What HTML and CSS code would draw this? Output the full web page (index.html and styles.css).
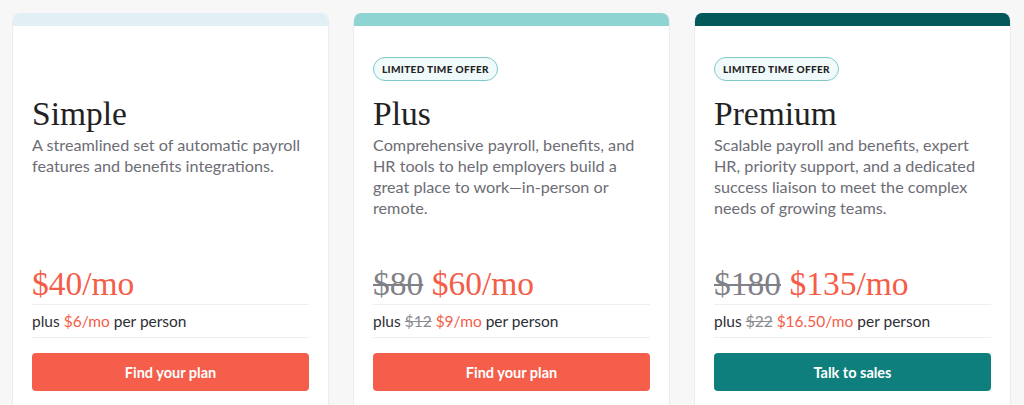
FILE: index.html
```html
<!DOCTYPE html>
<html lang="en">
<head>
<meta charset="utf-8">
<title>Plans</title>
<link rel="stylesheet" href="styles.css">
</head>
<body>
<main class="plans">
  <section class="card">
    <div class="card-bar bar-simple"></div>
    <div class="card-body">
      <div class="badge-slot"></div>
      <h2 class="plan-name">Simple</h2>
      <p class="plan-desc">A streamlined set of automatic payroll features and benefits integrations.</p>
      <div class="price"><span class="now">$40/mo</span></div>
      <div class="per-person">plus <span class="now">$6/mo</span> per person</div>
      <a class="cta cta-coral" href="#">Find your plan</a>
    </div>
  </section>
  <section class="card">
    <div class="card-bar bar-plus"></div>
    <div class="card-body">
      <div class="badge-slot"><span class="badge">LIMITED TIME OFFER</span></div>
      <h2 class="plan-name">Plus</h2>
      <p class="plan-desc">Comprehensive payroll, benefits, and HR tools to help employers build a great place to work—in-person or remote.</p>
      <div class="price"><span class="was">$80</span> <span class="now">$60/mo</span></div>
      <div class="per-person">plus <span class="was">$12</span> <span class="now">$9/mo</span> per person</div>
      <a class="cta cta-coral" href="#">Find your plan</a>
    </div>
  </section>
  <section class="card">
    <div class="card-bar bar-premium"></div>
    <div class="card-body">
      <div class="badge-slot"><span class="badge">LIMITED TIME OFFER</span></div>
      <h2 class="plan-name">Premium</h2>
      <p class="plan-desc">Scalable payroll and benefits, expert HR, priority support, and a dedicated success liaison to meet the complex needs of growing teams.</p>
      <div class="price"><span class="was">$180</span> <span class="now">$135/mo</span></div>
      <div class="per-person">plus <span class="was">$22</span> <span class="now">$16.50/mo</span> per person</div>
      <a class="cta cta-teal" href="#">Talk to sales</a>
    </div>
  </section>
</main>
</body>
</html>
```

FILE: styles.css
```css
* { box-sizing: border-box; }

body {
  margin: 0;
  background: #f7f7f7;
  font-family: "Lato", "Liberation Sans", sans-serif;
  overflow: hidden;
}

.plans {
  display: grid;
  grid-template-columns: repeat(3, 317px);
  column-gap: 24px;
  padding: 13px 0 0 12px;
}

.card {
  height: 420px;
  background: #fff;
  border: 1px solid #ececec;
  border-top: 0;
  border-radius: 8px 8px 0 0;
  overflow: hidden;
}

.card-bar { height: 13px; margin: 0 -1px; }
.bar-simple { background: #e0f0f5; }
.bar-plus { background: #8ed4d2; }
.bar-premium { background: #03585a; }

.card-body {
  padding: 31px 19px 0 19px;
}

.badge-slot { height: 24px; }

.badge {
  display: inline-flex;
  align-items: center;
  height: 24px;
  padding: 0 8px;
  border: 1px solid #80c8c8;
  border-radius: 12px;
  background: #f1fafb;
  color: #222;
  font-size: 10px;
  font-weight: 900;
  letter-spacing: 0.35px;
}

.plan-name {
  margin: 13px 0 0;
  font-family: "Liberation Serif", serif;
  font-weight: 400;
  font-size: 33.5px;
  line-height: 40px;
  color: #222;
}

.plan-desc {
  margin: 0;
  min-height: 129px;
  font-size: 16.2px;
  line-height: 21px;
  color: #6d6d75;
}

.price {
  height: 42px;
  font-family: "Liberation Serif", serif;
  font-size: 33.5px;
  line-height: 42px;
  border-bottom: 1px solid #efefef;
}

.price .now { color: #f45d48; }
.price .was { color: #7f8187; text-decoration: line-through; text-decoration-thickness: 2px; }

.per-person {
  height: 33px;
  line-height: 32px;
  font-size: 15.5px;
  color: #2e2e36;
  border-bottom: 1px solid #efefef;
}

.per-person .now { color: #f45d48; }
.per-person .was { color: #8a8b90; text-decoration: line-through; }

.cta {
  display: flex;
  align-items: center;
  justify-content: center;
  height: 38px;
  margin-top: 15px;
  border-radius: 4px;
  color: #fff;
  font-size: 14.5px;
  font-weight: 700;
  text-decoration: none;
}

.cta-coral { background: #f45e4a; }
.cta-teal { background: #0e7f7d; }
```
